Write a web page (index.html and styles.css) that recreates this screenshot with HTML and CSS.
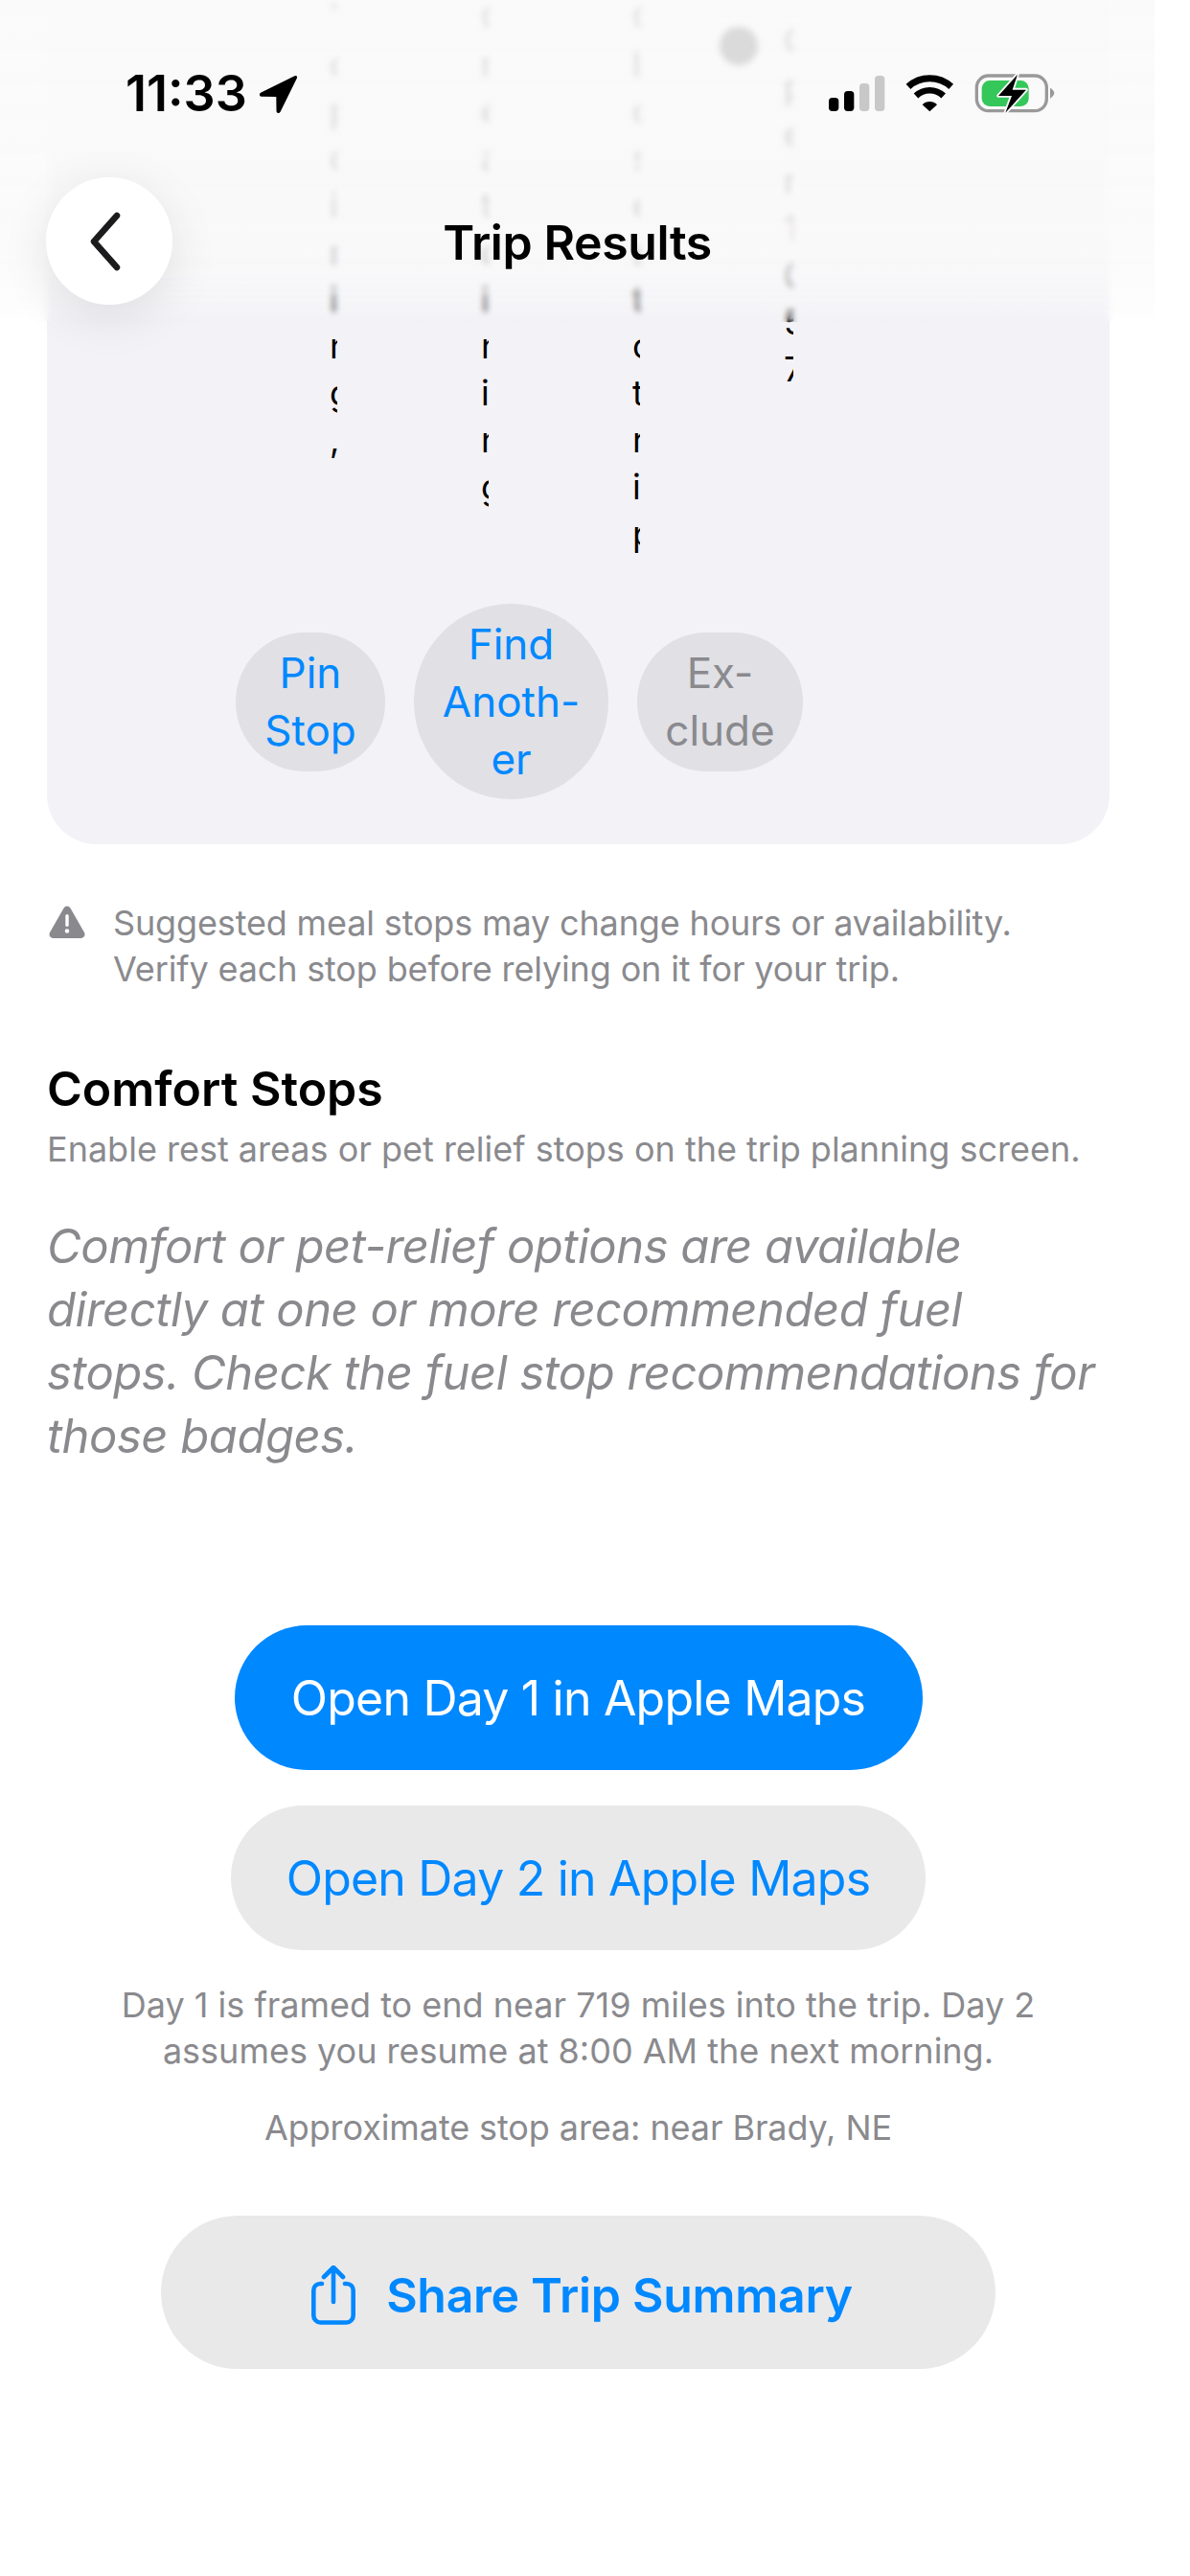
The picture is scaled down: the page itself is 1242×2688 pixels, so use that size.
FILE: index.html
```html
<!DOCTYPE html>
<html lang="en">

<head>
  <meta charset="UTF-8" />
  <meta name="viewport" content="width=device-width,initial-scale=1" />
  <title>Trip Results</title>
  <link rel="stylesheet" href="styles.css">
</head>

<body>
  <div class="page">
    <section class="card">
      <div class="strips">
        <div class="strip">Top dining<br>,</div>
        <div class="strip">Great dining</div>
        <div class="strip">Closest ctrip</div>
        <div class="strip strip-last">Open 10:<br>5<br>7</div>
      </div>
      <div class="pills">
        <button class="pill">Pin<br>Stop</button>
        <button class="pill pill-round">Find<br>Anoth-<br>er</button>
        <button class="pill pill-muted">Ex-<br>clude</button>
      </div>
    </section>

    <!-- blurred nav area that sits over the scrolled card -->
    <header class="nav">
      <span class="blur-dot"></span>
      <div class="status">
        <div class="clock">
          <span>11:33</span>
          <svg class="loc" viewBox="0 0 40 40" width="40" height="40">
            <path d="M37.5 1.2 2.5 18.6c-2.6 1.3-1.8 4.2 1 4.2l14.8.1.2 14.6c0 2.8 3 3.5 4.2 1L39.9 3.6c.9-1.8-.7-3.2-2.4-2.4z" fill="#000" />
          </svg>
        </div>
        <svg class="sys" viewBox="0 0 900 300" width="300" height="100">
          <rect x="15" y="156" width="31" height="42" rx="11" fill="#000" />
          <rect x="63" y="135" width="31" height="63" rx="11" fill="#000" />
          <rect x="111" y="111" width="31" height="87" rx="11" fill="#c8c8c8" />
          <rect x="159" y="87" width="31" height="111" rx="11" fill="#c8c8c8" />
          <path d="M264 121a100 100 0 0 1 134 0" fill="none" stroke="#000" stroke-width="21" />
          <path d="M288 150a62 62 0 0 1 86 0" fill="none" stroke="#000" stroke-width="20" />
          <path d="M308 178a32 32 0 0 1 46 0l-23 21z" fill="#000" />
          <rect x="478" y="87" width="219" height="110" rx="37" fill="none" stroke="#999" stroke-width="10" />
          <rect x="494" y="102" width="147" height="81" rx="25" fill="#34c759" />
          <path d="M708 125q13 8 13 16t-13 17z" fill="#999" />
          <path d="M606 83 546 150h42l-20 53 65-72h-43z" fill="#000" stroke="#fafafa" stroke-width="11" paint-order="stroke" stroke-linejoin="round" />
        </svg>
      </div>
      <div class="titlebar">
        <button class="back">
          <svg viewBox="0 0 40 64" width="40" height="64">
            <path d="M33 5 9 32l24 27" fill="none" stroke="#1c1c1e" stroke-width="6.5" stroke-linecap="round" stroke-linejoin="round" />
          </svg>
        </button>
        <h1>Trip Results</h1>
      </div>
    </header>

    <div class="notice">
      <svg class="warn" viewBox="0 0 38 34" width="38" height="34">
        <path d="M15.6 2.4c1.5-2.7 5.3-2.7 6.8 0l14.6 25.7c1.5 2.7-.4 5.9-3.4 5.9H4.400c-3 0-4.900-3.200-3.400-5.900z" fill="#8a8a8e" />
        <rect x="17.300" y="9" width="3.400" height="13" rx="1.700" fill="#fff" />
        <circle cx="19" cy="26.500" r="2.200" fill="#fff" />
      </svg>
      <p>Suggested meal stops may change hours or availability.<br>Verify each stop before relying on it for your trip.</p>
    </div>

    <section class="comfort">
      <h2>Comfort Stops</h2>
      <p class="sub">Enable rest areas or pet relief stops on the trip planning screen.</p>
      <p class="hint">Comfort or pet-relief options are available directly at one or more recommended fuel stops. Check the fuel stop recommendations for those badges.</p>
    </section>

    <div class="actions">
      <button class="btn btn-primary">Open Day 1 in Apple Maps</button>
      <button class="btn btn-second">Open Day 2 in Apple Maps</button>
      <p class="note">Day 1 is framed to end near 719 miles into the trip. Day 2<br>assumes you resume at 8:00 AM the next morning.</p>
      <p class="note note-area">Approximate stop area: near Brady, NE</p>
      <button class="btn btn-share">
        <svg viewBox="0 0 46 62" width="46" height="62">
          <path d="M11 19H9.500C5.400 19 2.300 22 2.300 26v26c0 4 3.100 7.500 7.200 7.500h27c4.100 0 7.200-3.500 7.200-7.500V26c0-4-3.100-7-7.200-7H35" fill="none" stroke="#0088ff" stroke-width="4.600" stroke-linecap="round" />
          <path d="M23 38V3M13 12l10-10 10 10" fill="none" stroke="#0088ff" stroke-width="4.600" stroke-linecap="round" stroke-linejoin="round" />
        </svg>
        <span>Share Trip Summary</span>
      </button>
    </div>
  </div>
</body>

</html>
```

FILE: styles.css
```css
* {
  box-sizing: border-box;
  margin: 0;
  padding: 0;
}

body {
  font-family: Inter, "Liberation Sans", sans-serif;
  background: #fff;
  color: #000;
}

button {
  font-family: inherit;
  border: none;
}

.page {
  position: relative;
  width: 1242px;
  height: 2688px;
  overflow: hidden;
}

/* card */
.card {
  margin: 0 84px 0 49px;
  height: 881px;
  background: #f2f2f7;
  border-radius: 0 0 52px 52px;
  padding-bottom: 47px;
}

.strips {
  display: flex;
  gap: 150px;
  height: 630px;
  padding-left: 295px;
  font-size: 36px;
  line-height: 49px;
  color: #000;
}

.strip {
  width: 8px;
  height: 590px;
  margin-top: -6px;
  overflow: hidden;
  word-break: break-all;
}

.strip-last {
  width: 10px;
  margin-top: 18px;
}

.pills {
  display: flex;
  align-items: center;
  gap: 30px;
  height: 204px;
  padding-left: 197px;
}

.pill {
  background: #e0e0e5;
  color: #0088ff;
  font-size: 44px;
  line-height: 60px;
  width: 156px;
  height: 145px;
  border-radius: 72px;
}

.pill-round {
  width: 203px;
  height: 204px;
  border-radius: 102px;
}

.pill-muted {
  width: 173px;
  color: #8a8a8e;
}

/* nav overlay */
.nav {
  position: absolute;
  top: 0;
  left: 0;
  width: 1205px;
  height: 336px;
  background: linear-gradient(rgba(250, 250, 250, .88) 0, rgba(250, 250, 250, .85) 250px, rgba(250, 250, 250, .7) 290px, rgba(250, 250, 250, .3) 326px, rgba(250, 250, 250, 0) 336px);
  backdrop-filter: blur(3px);
}

.blur-dot {
  position: absolute;
  top: 28px;
  left: 751px;
  width: 40px;
  height: 40px;
  border-radius: 50%;
  background: #dadada;
  filter: blur(3px);
}

.status {
  height: 185px;
  position: relative;
}

.clock {
  position: absolute;
  top: 68px;
  left: 131px;
  display: flex;
  align-items: center;
  gap: 12px;
  font-size: 52px;
  line-height: 60px;
  font-weight: 600;
}

.sys {
  position: absolute;
  top: 50px;
  left: 860px;
}

.titlebar {
  position: relative;
  height: 133px;
  display: flex;
  align-items: center;
  justify-content: center;
}

.titlebar h1 {
  font-size: 50px;
  font-weight: 600;
  letter-spacing: -.4px;
  margin-top: 2px;
}

.back {
  position: absolute;
  left: 48px;
  top: 0;
  width: 132px;
  height: 133px;
  border-radius: 50%;
  background: #fff;
  box-shadow: 0 12px 50px rgba(0, 0, 0, .1);
  display: flex;
  align-items: center;
  justify-content: center;
  padding-right: 10px;
}

/* text blocks */
.notice {
  display: flex;
  gap: 29px;
  padding: 58px 0 0 51px;
  color: #8a8a8e;
  font-size: 36px;
  line-height: 48px;
  letter-spacing: -.15px;
}

.warn {
  margin-top: 6px;
  flex: none;
}

.comfort {
  padding: 71px 49px 0;
  width: 1207px;
}

.comfort h2 {
  font-size: 50px;
  line-height: 60px;
  font-weight: 600;
}

.sub {
  margin-top: 11px;
  font-size: 36px;
  line-height: 44px;
  color: #8a8a8e;
}

.hint {
  margin: 47px 10px 0 0;
  font-size: 49px;
  line-height: 66px;
  letter-spacing: -.5px;
  font-style: italic;
  color: #8a8a8e;
}

.actions {
  display: flex;
  flex-direction: column;
  align-items: center;
  width: 1207px;
  margin-top: 164px;
}

.btn {
  font-size: 50px;
  letter-spacing: -.8px;
  height: 151px;
  border-radius: 76px;
}

.btn-primary {
  width: 718px;
  background: #0088ff;
  color: #fff;
}

.btn-second {
  width: 725px;
  margin-top: 37px;
  background: #e9e9ea;
  color: #0088ff;
}

.note {
  margin-top: 33px;
  text-align: center;
  font-size: 36px;
  line-height: 48px;
  color: #8a8a8e;
}

.note-area {
  margin-top: 32px;
  letter-spacing: -.1px;
}

.btn-share {
  width: 871px;
  height: 160px;
  margin-top: 68px;
  padding: 5px 0 0 8px;
  border-radius: 80px;
  background: #e9e9ea;
  color: #0088ff;
  font-weight: 600;
  letter-spacing: -.3px;
  display: flex;
  align-items: center;
  justify-content: center;
  gap: 32px;
}
```
